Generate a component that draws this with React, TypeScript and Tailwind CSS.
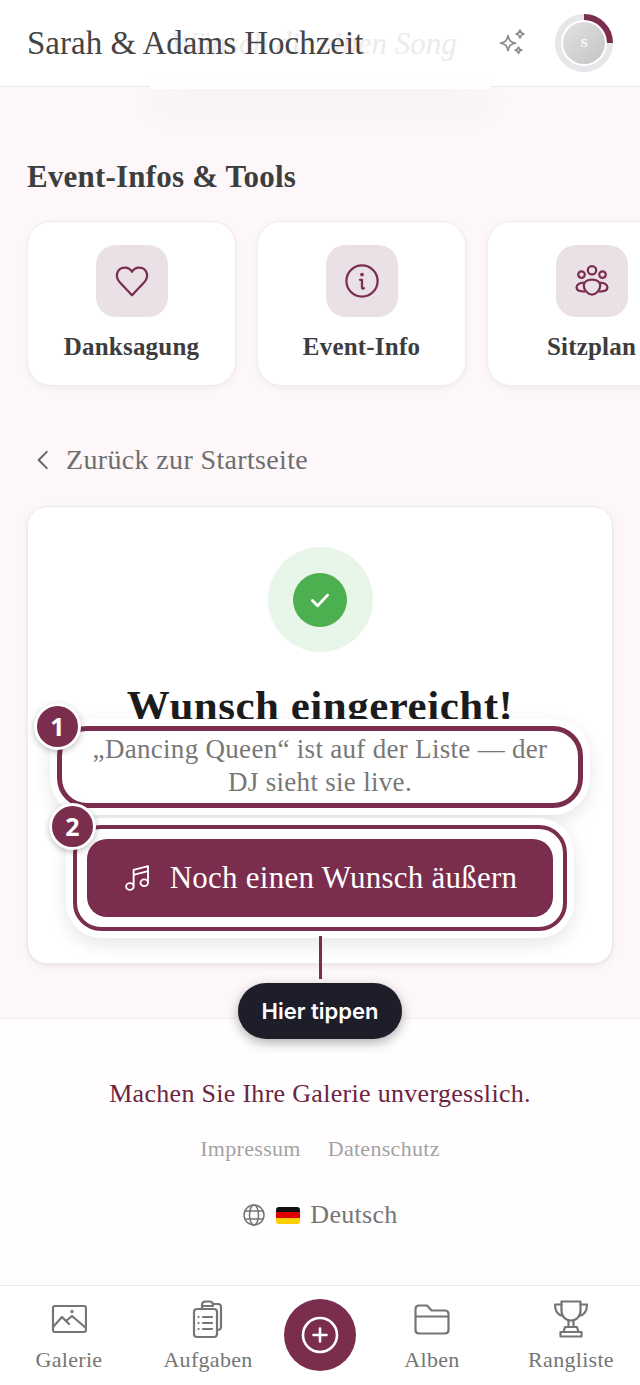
import { ReactNode } from "react";

const WINE = "#7b2d4e";

const serif = "font-['Liberation_Serif',serif]";

function Icon({ size, color, width = 1.7, children }: { size: number; color: string; width?: number; children: ReactNode }) {
  return (
    <svg width={size} height={size} viewBox="0 0 24 24" fill="none" stroke={color} strokeWidth={width} strokeLinecap="round" strokeLinejoin="round">
      {children}
    </svg>
  );
}

function ToolCard({ label, children }: { label: string; children: ReactNode }) {
  return (
    <div className="flex h-[165px] w-[209px] shrink-0 flex-col items-center rounded-[24px] border border-[#f0ecee] bg-white pt-[23px] shadow-[0_2px_6px_rgba(0,0,0,0.05)]">
      <div className="flex h-[72px] w-[72px] items-center justify-center rounded-[20px] bg-[#e9e1e5]">{children}</div>
      <div className="mt-[15px] text-[25px] leading-[30px] font-bold tracking-[0.2px] whitespace-nowrap text-[#3d3d3d]">{label}</div>
    </div>
  );
}

function NavItem({ label, children }: { label: string; children: ReactNode }) {
  return (
    <div className="flex flex-col items-center">
      <div className="flex h-[40px] items-center justify-center">{children}</div>
      <div className="mt-[8px] text-[22px] leading-[26px] tracking-[0.3px] text-[#757575]">{label}</div>
    </div>
  );
}

function Badge({ n, className }: { n: number; className: string }) {
  return (
    <div className={`absolute z-20 flex h-[47px] w-[47px] items-center justify-center rounded-full border-[3px] border-white bg-[#7b2d4e] font-['Noto_Sans',sans-serif] text-[25px] font-bold text-white shadow-[0_2px_6px_rgba(0,0,0,0.25)] ${className}`}>
      {n}
    </div>
  );
}

export default function App() {
  return (
    <div className={`relative flex h-[1385px] w-[640px] flex-col overflow-hidden bg-[#fdf7f9] ${serif}`}>
      {/* header */}
      <header className="relative z-10 flex h-[87px] shrink-0 items-center border-b border-[#eeeaec] bg-white pr-[26px] pl-[27px]">
        <div className="absolute top-[25px] left-[170px] text-[31px] leading-[38px] whitespace-nowrap text-[#d9d9d9] italic opacity-50">Wünsch dir einen Song</div>
        <div className="relative text-[33px] leading-[40px] text-[#444]">Sarah &amp; Adams Hochzeit</div>
        <div className="absolute top-[86px] left-[150px] h-[3px] w-[341px] rounded-b-[3px] bg-white shadow-[0_14px_32px_rgba(0,0,0,0.22)]" />
        <div className="ml-auto flex items-center gap-[26px]">
          <svg width="32" height="32" viewBox="0 0 32 32" fill="none" stroke="#8e8e8e" strokeWidth="1.7" strokeLinejoin="round">
            <path d="M12 8.5c1 5 2.5 6.6 7.5 7.6-5 1-6.5 2.6-7.5 7.6-1-5-2.5-6.6-7.5-7.6 5-1 6.5-2.6 7.5-7.6z" />
            <path d="M24 3c.5 2.6 1.4 3.5 4 4-2.6.5-3.5 1.4-4 4-.5-2.6-1.4-3.5-4-4 2.6-.5 3.5-1.4 4-4z" />
            <path d="M22.5 20c.4 2 1.1 2.7 3.2 3.2-2.1.4-2.8 1.1-3.2 3.2-.4-2.1-1.1-2.8-3.2-3.2 2.1-.5 2.8-1.2 3.2-3.2z" />
          </svg>
          <div className="relative flex h-[60px] w-[60px] items-center justify-center">
            <svg className="absolute inset-0" width="60" height="60" viewBox="0 0 60 60" fill="none">
              <circle cx="30" cy="30" r="26" stroke="#e5e7eb" strokeWidth="6" />
              <path d="M30 4a26 26 0 0 1 26 26" stroke={WINE} strokeWidth="6" />
            </svg>
            <div className="flex h-[42px] w-[42px] items-center justify-center rounded-full bg-gradient-to-br from-[#e2e2e2] to-[#c4c4c4] text-[13px] font-bold text-white">S</div>
          </div>
        </div>
      </header>

      {/* tools */}
      <h2 className="mt-[71px] pl-[27px] text-[31px] leading-[38px] font-bold tracking-[0.2px] text-[#3d3d3d]">Event-Infos &amp; Tools</h2>
      <div className="mt-[25px] flex gap-[21px] pl-[27px]">
        <ToolCard label="Danksagung">
          <svg width="36" height="36" viewBox="0 0 24 24" fill="none" stroke={WINE} strokeWidth="1.5" strokeLinejoin="round">
            <path d="M12 21.5 4 13c-1.800-2-2.300-3.700-2-5.500C2.500 4.500 4.800 3 7.300 3c2 0 3.700 1 4.700 2.800C13 4 14.700 3 16.700 3c2.500 0 4.800 1.500 5.300 4.500.3 1.800-.2 3.500-2 5.500z" />
          </svg>
        </ToolCard>
        <ToolCard label="Event-Info">
          <svg width="36" height="36" viewBox="0 0 24 24" fill="none" stroke={WINE} strokeWidth="1.5" strokeLinecap="round" strokeLinejoin="round">
            <circle cx="12" cy="12" r="10.400" />
            <path d="M10.700 11.200h1.300v5.300c0 .5.500.7 1.300.3" />
            <circle cx="12" cy="7.700" r=".5" fill={WINE} />
          </svg>
        </ToolCard>
        <ToolCard label="Sitzplan">
          <svg width="36" height="36" viewBox="0 0 24 24" fill="none" stroke={WINE} strokeWidth="1.500">
            <circle cx="12" cy="4.800" r="2.800" />
            <circle cx="5" cy="7.700" r="2.200" />
            <circle cx="19" cy="7.700" r="2.200" />
            <path d="M6.500 15c0-2.400 2.400-4 5.500-4s5.500 1.600 5.500 4-2.400 6-5.500 6-5.500-3.600-5.500-6z" />
            <path d="M6.500 13c-2.500 0-4.800 1.400-4.800 3.300 0 1.700 2.500 2.700 5.800 2.700" />
            <path d="M17.500 13c2.500 0 4.800 1.400 4.800 3.300 0 1.700-2.500 2.700-5.800 2.700" />
          </svg>
        </ToolCard>
      </div>

      {/* back */}
      <div className="mt-[56px] flex items-center pl-[30px]">
        <Icon size={26} color="#666" width={1.8}>
          <path d="m15.500 4.500-7.500 7.500 7.500 7.500" />
        </Icon>
        <span className="ml-[10px] text-[28px] leading-[36px] tracking-[0.35px] text-[#6e6e6e]">Zurück zur Startseite</span>
      </div>

      {/* success card */}
      <section className="relative mx-[27px] mt-[28px] flex h-[458px] shrink-0 flex-col items-center rounded-[20px] border border-[#ebe8e9] bg-white pt-[40px] shadow-[0_2px_6px_rgba(0,0,0,0.08)]">
        <div className="flex h-[105px] w-[105px] items-center justify-center rounded-full bg-[#e8f5e9]">
          <div className="flex h-[54px] w-[54px] items-center justify-center rounded-full bg-[#4caf50]">
            <Icon size={26} color="#fff" width={2.6}>
              <path d="m5 12.500 4.800 4.800L19 7.500" />
            </Icon>
          </div>
        </div>
        <h1 className="mt-[29px] text-[43px] leading-[50px] font-bold tracking-[0.5px] whitespace-nowrap text-[#1c1c1c]">Wunsch eingereicht!</h1>

        <div className="relative z-10 -mt-[5px] w-[526px] rounded-[30px] border-[5px] border-[#7b2d4e] bg-white px-[14px] pt-[2px] pb-[4px] text-center text-[27px] leading-[33px] tracking-[0.3px] text-[#777] shadow-[0_0_0_7px_#fff,0_6px_18px_7px_rgba(0,0,0,0.1)]">
          <Badge n={1} className="-top-[28px] -left-[28px]" />
          „Dancing Queen“ ist auf der Liste — der DJ sieht sie live.
        </div>

        <div className="relative z-10 mt-[17px] w-[494px] rounded-[28px] border-[4px] border-[#7b2d4e] bg-white p-[10px] shadow-[0_0_0_7px_#fff,0_6px_18px_7px_rgba(0,0,0,0.1)]">
          <Badge n={2} className="-top-[26px] -left-[28px]" />
          <div className="flex h-[78px] items-center justify-center gap-[17px] rounded-[20px] bg-[#7b2d4e] text-[31px] tracking-[0.25px] text-white">
            <svg width="30" height="30" viewBox="0 0 24 24" fill="none" stroke="#fff" strokeWidth="1.500" strokeLinejoin="round">
              <path d="M8.500 18.500V5.500L20 2.500v13" />
              <path d="M8.500 9.500 20 6.500" />
              <ellipse cx="5.500" cy="18.800" rx="3" ry="2.700" />
              <ellipse cx="17" cy="15.800" rx="3" ry="2.700" />
            </svg>
            Noch einen Wunsch äußern
          </div>
        </div>
      </section>

      {/* tooltip over the card edge */}
      <div className="absolute top-[936px] left-[318.500px] z-20 h-[43px] w-[3px] bg-[#7b2d4e]" />
      <div className="absolute top-[983px] left-[238px] z-20 flex h-[56px] w-[164px] items-center justify-center rounded-[28px] bg-[#1e1e2a] font-['Inter',sans-serif] text-[22px] font-semibold text-white shadow-[0_4px_12px_rgba(0,0,0,0.3)]">
        Hier tippen
      </div>

      {/* footer */}
      <footer className="mt-[54px] flex min-h-0 flex-1 flex-col items-center border-t border-[#f0ecee] bg-[#fffdfe] pt-[58px]">
        <p className="text-[26px] leading-[34px] tracking-[0.3px] text-[#6b2442]">Machen Sie Ihre Galerie unvergesslich.</p>
        <div className="mt-[24px] flex gap-[27px] text-[22px] leading-[28px] tracking-[0.3px] text-[#a3a3a3]">
          <span>Impressum</span>
          <span>Datenschutz</span>
        </div>
        <div className="mt-[36px] flex items-center">
          <Icon size={24} color="#757575" width={1.500}>
            <circle cx="12" cy="12" r="10" />
            <ellipse cx="12" cy="12" rx="4.500" ry="10" />
            <path d="M3 8h18M3 16h18" />
          </Icon>
          <div className="ml-[10px] flex h-[17px] w-[24px] flex-col overflow-hidden rounded-[3px]">
            <div className="flex-1 bg-[#111]" />
            <div className="flex-1 bg-[#dd0000]" />
            <div className="flex-1 bg-[#ffce00]" />
          </div>
          <span className="ml-[10px] text-[26px] leading-[32px] tracking-[0.3px] text-[#757575]">Deutsch</span>
        </div>
      </footer>

      {/* bottom nav */}
      <nav className="grid h-[100px] shrink-0 grid-cols-[138px_140px_84px_140px_138px] border-t border-[#eeeaec] bg-white pt-[13px]">
        <NavItem label="Galerie">
          <svg width="36" height="36" viewBox="0 0 36 36" fill="none" stroke="#757575" strokeWidth="2.200" strokeLinejoin="round" strokeLinecap="round">
            <rect x="2" y="5" width="33" height="26" rx="2" />
            <path d="m2 26 9-10 7 7M15 20l6-5 14 12" />
            <circle cx="21" cy="10.500" r=".6" fill="#757575" />
          </svg>
        </NavItem>
        <NavItem label="Aufgaben">
          <svg width="36" height="40" viewBox="0 0 36 40" fill="none" stroke="#757575" strokeWidth="2.200" strokeLinejoin="round" strokeLinecap="round">
            <rect x="4" y="10" width="23" height="28" rx="3" />
            <path d="M12 10V6c0-2 1.500-3.500 3.500-3.500h4C21.500 2.500 23 4 23 6v1h-11" />
            <path d="M23 5h5c2 0 3 1 3 3v20c0 2-1 3-4 3" />
            <path d="M13 18h9M13 24h9M13 30h9M8.500 18h.1M8.500 24h.1M8.500 30h.1" />
          </svg>
        </NavItem>
        <div className="flex justify-center">
          <div className="flex h-[72px] w-[72px] items-center justify-center rounded-full bg-[#7b2d4e]">
            <svg width="38" height="38" viewBox="0 0 38 38" fill="none" stroke="#fff" strokeWidth="2.600" strokeLinecap="round">
              <circle cx="19" cy="19" r="17" />
              <path d="M19 12.500v13M12.500 19h13" />
            </svg>
          </div>
        </div>
        <NavItem label="Alben">
          <svg width="36" height="36" viewBox="0 0 36 36" fill="none" stroke="#757575" strokeWidth="2.200" strokeLinejoin="round">
            <path d="M1.500 8.500c0-2.500 1.500-4 3.500-4h8l4.500 5H31c2 0 3.500 1.500 3.500 3.500v16c0 2-1.500 3.500-3.500 3.500H5c-2 0-3.500-1.500-3.500-3.500z" />
            <path d="M1.500 15.500h33" />
          </svg>
        </NavItem>
        <NavItem label="Rangliste">
          <svg width="36" height="40" viewBox="0 0 36 40" fill="none" stroke="#757575" strokeWidth="2.200" strokeLinejoin="round" strokeLinecap="round">
            <path d="M8.500 2.500h19v9c0 6-4 10-9.500 10s-9.500-4-9.500-10z" />
            <path d="M8.500 5.500H2c0 7 2.500 10.500 8 11.500M27.500 5.500H34c0 7-2.500 10.500-8 11.500" />
            <path d="M15.500 21.500V28h5v-6.500M12 28h12l1.500 5h-15zM7.500 37.500h21V33h-21z" />
          </svg>
        </NavItem>
      </nav>
    </div>
  );
}
